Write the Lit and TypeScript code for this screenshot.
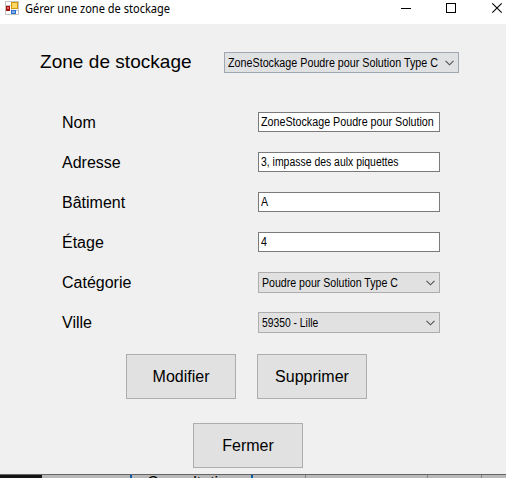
import { LitElement, html, css, svg } from "lit";
import { customElement, property } from "lit/decorators.js";
import { styleMap } from "lit/directives/style-map.js";

@customElement("field-box")
class FieldBox extends LitElement {
  @property() value = "";
  @property({ type: Number }) stretch = 0.89;
  @property({ type: Boolean }) combo = false;
  @property({ type: Boolean }) main = false;

  static styles = css`
    :host { display: block; font: 12px "Liberation Sans", Arial, sans-serif; color: #000; }
    .box { box-sizing: border-box; display: flex; align-items: center; overflow: hidden; white-space: nowrap; height: 20px; border: 1px solid #7a7a7a; background: #fff; padding: 0 0 0 2px; }
    .combo { height: 21px; background: #e1e1e1; border-color: #adadad; padding: 0 4px 0 3px; }
    .main { background: #e0e1e3; border-color: #a0a7b0; }
    .text { flex: 1; width: 0; line-height: 18px; transform-origin: left; }
    svg { flex: none; }
  `;

  render() {
    return html`<div class="box ${this.combo ? "combo" : ""} ${this.main ? "main" : ""}">
      <span class="text" style=${styleMap({ transform: `scaleX(${this.stretch})` })}>${this.value}</span>
      ${this.combo
        ? html`<svg width="9" height="6" viewBox="0 0 9 6"><path d="M.5 .8 4.5 4.8 8.5 .8" fill="none" stroke="#505050" stroke-width="1.1" /></svg>`
        : ""}
    </div>`;
  }
}

@customElement("app-root")
class AppRoot extends LitElement {
  static styles = css`
    :host { display: flex; flex-direction: column; width: 506px; height: 478px; overflow: hidden; background: #f0f0f0; color: #000; font: 16px "Liberation Sans", Arial, sans-serif; }
    .titlebar { height: 24px; flex: none; background: #fff; display: flex; align-items: flex-start; box-sizing: border-box; padding-left: 5px; }
    .logo { margin-top: 1px; flex: none; }
    .title { margin: 0 0 0 6px; font: 12px/18px "Noto Sans", sans-serif; flex: 1; white-space: nowrap; transform: scaleX(0.92); transform-origin: left; }
    .controls { flex: none; }
    .head { display: flex; height: 21px; margin: 28px 0 0 40px; align-items: center; }
    .heading { width: 184px; font-size: 19px; letter-spacing: 0.04px; line-height: 21px; margin-top: -2px; }
    .head field-box { width: 235px; }
    .form { display: grid; grid-template-columns: 196px 182px; grid-auto-rows: 40px; margin: 39px 0 0 62px; height: 242px; flex: none; }
    .label { line-height: 21px; }
    .actions { display: flex; gap: 21px; margin-left: 126px; }
    .close { margin: 24px 0 0 193px; }
    button { box-sizing: border-box; width: 110px; height: 45px; padding: 0; border: 1px solid #adadad; background: #e1e1e1; font: inherit; color: inherit; display: block; }
    .behind { margin-top: auto; height: 4px; box-sizing: border-box; border-top: 1px solid #666; flex: none; display: block; overflow: hidden; }
    .behind svg { display: block; }
  `;

  private fields = [
    { label: "Nom", value: "ZoneStockage Poudre pour Solution", combo: false, stretch: 0.893 },
    { label: "Adresse", value: "3, impasse des aulx piquettes", combo: false, stretch: 0.87 },
    { label: "Bâtiment", value: "A", combo: false, stretch: 0.89 },
    { label: "Étage", value: "4", combo: false, stretch: 0.89 },
    { label: "Catégorie", value: "Poudre pour Solution Type C", combo: true, stretch: 0.883 },
    { label: "Ville", value: "59350 - Lille", combo: true, stretch: 0.86 },
  ];

  render() {
    return html`
      <div class="titlebar">
        <svg class="logo" width="14" height="14" viewBox="0 0 14 14" shape-rendering="crispEdges">
          <path d="M.5 .5H13.5V13.5H.5ZM.5 4.5H6M6 .5V13.5M6 9.5H13.5" fill="#fff" stroke="#c3c3c3" />
          <rect x="6" y="1" width="7" height="7" fill="#d59a08" /><rect x="7" y="2" width="5" height="5" fill="#fbd763" />
          <rect x="1" y="5" width="4" height="5" fill="#a31212" /><rect x="2" y="6" width="2" height="2" fill="#e06b5c" />
          <rect x="6" y="9" width="5" height="4" fill="#2d6cc7" /><rect x="7" y="10" width="3" height="2" fill="#7fb0ee" />
        </svg>
        <h1 class="title">Gérer une zone de stockage</h1>
        <svg class="controls" width="105" height="18" viewBox="0 0 105 18" fill="none" stroke="#000">
          <path d="M0 8.5H10M45.5 3.5H54.5V12.5H45.5Z" shape-rendering="crispEdges" />
          <path d="M91.3 3.3 100.7 12.7M100.7 3.3 91.3 12.7" stroke-width="1.1" />
        </svg>
      </div>
      <div class="head">
        <div class="heading">Zone de stockage</div>
        <field-box combo main stretch="0.895" value="ZoneStockage Poudre pour Solution Type C"></field-box>
      </div>
      <div class="form">
        ${this.fields.map(
          (f) => html`<div class="label">${f.label}</div>
            <field-box .value=${f.value} .combo=${f.combo} .stretch=${f.stretch}></field-box>`
        )}
      </div>
      <div class="actions"><button>Modifier</button><button>Supprimer</button></div>
      <button class="close">Fermer</button>
      <div class="behind">
        <svg width="506" height="3" shape-rendering="crispEdges">
          <rect width="506" height="3" fill="#b9b9b9" /><rect width="42" height="3" fill="#141414" />
          ${[130, 251].map((x) => svg`<rect x=${x} width="2" height="3" fill="#0a5ca8" />`)}
          ${[305, 427, 481].map((x) => svg`<rect x=${x} width="1" height="3" fill="#858585" />`)}
          <text x="147" y="13" font-size="16">Consultation</text>
        </svg>
      </div>
    `;
  }
}
